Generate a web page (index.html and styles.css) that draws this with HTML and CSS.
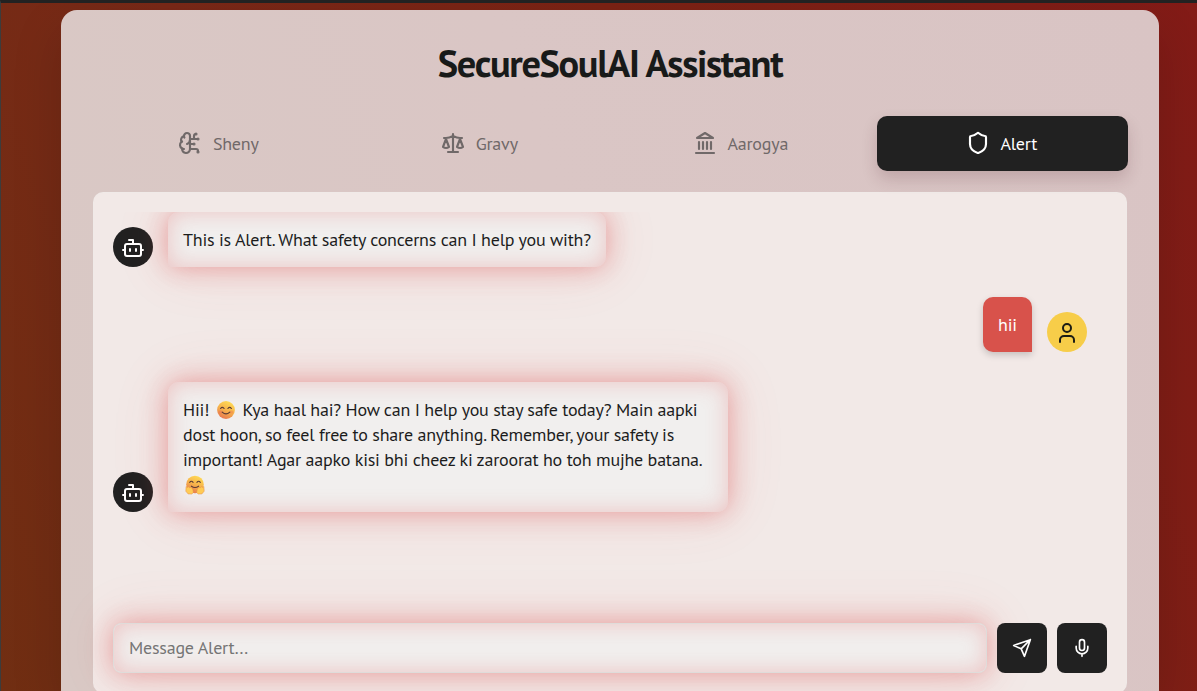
FILE: index.html
```html
<!DOCTYPE html>
<html lang="en">
<head>
<meta charset="utf-8">
<title>SecureSoulAI Assistant</title>
<link rel="stylesheet" href="styles.css">
</head>
<body>
<svg class="defs" width="0" height="0" aria-hidden="true">
  <defs>
    <linearGradient id="face" x1="0.7" y1="0" x2="0.25" y2="1"><stop offset="0" stop-color="#ffdc55"/><stop offset=".5" stop-color="#f6b14b"/><stop offset="1" stop-color="#e5734f"/></linearGradient>
    <symbol id="bot" viewBox="0 0 24 24"><path d="M12 8V4H8"/><rect width="16" height="12" x="4" y="8" rx="2"/><path d="M2 14h2M20 14h2M15 13v2M9 13v2"/></symbol>
  </defs>
</svg>
<main class="card">
  <h1 class="title">SecureSoulAI Assistant</h1>
  <nav class="tabs">
    <button class="tab">
      <svg class="icon" viewBox="0 0 24 24"><path d="M12 5a3 3 0 1 0-5.997.125 4 4 0 0 0-2.526 5.77 4 4 0 0 0 .556 6.588A4 4 0 1 0 12 18Z"/><path d="M9 13a4.5 4.5 0 0 0 3-4M6.003 5.125A3 3 0 0 0 6.401 6.5M3.477 10.896a4 4 0 0 1 .585-.396M6 18a4 4 0 0 1-1.967-.516M12 13h4M12 18h6a2 2 0 0 1 2 2v1M12 8h8M16 8V5a2 2 0 0 1 2-2"/><circle cx="16" cy="13" r=".5"/><circle cx="18" cy="3" r=".5"/><circle cx="20" cy="21" r=".5"/><circle cx="20" cy="8" r=".5"/></svg>
      <span>Sheny</span>
    </button>
    <button class="tab">
      <svg class="icon" viewBox="0 0 24 24"><path d="m16 16 3-8 3 8c-.87.65-1.92 1-3 1s-2.13-.35-3-1ZM2 16l3-8 3 8c-.87.65-1.92 1-3 1s-2.13-.35-3-1ZM7 21h10M12 3v18M3 7h2c2 0 5-1 7-2 2 1 5 2 7 2h2"/></svg>
      <span>Gravy</span>
    </button>
    <button class="tab">
      <svg class="icon" viewBox="0 0 24 24"><path d="M3 22h18M6 18v-7M10 18v-7M14 18v-7M18 18v-7M12 2l8 5H4Z"/></svg>
      <span>Aarogya</span>
    </button>
    <button class="tab active">
      <svg class="icon" viewBox="0 0 24 24"><path d="M20 13c0 5-3.5 7.5-7.66 8.95a1 1 0 0 1-.67-.01C7.5 20.5 4 18 4 13V6a1 1 0 0 1 1-1c2 0 4.5-1.2 6.24-2.72a1.17 1.17 0 0 1 1.52 0C14.51 3.81 17 5 19 5a1 1 0 0 1 1 1z"/></svg>
      <span>Alert</span>
    </button>
  </nav>
  <section class="chat">
    <div class="messages">
      <div class="message">
        <div class="avatar"><svg class="icon"><use href="#bot"/></svg></div>
        <div class="bubble greeting"><p>This is Alert. What safety concerns can I help you with?</p></div>
      </div>
      <div class="message user">
        <div class="bubble"><p>hii</p></div>
        <div class="avatar"><svg class="icon" viewBox="0 0 24 24"><path d="M19 21v-2a4 4 0 0 0-4-4H9a4 4 0 0 0-4 4v2"/><circle cx="12" cy="7" r="4"/></svg></div>
      </div>
      <div class="message">
        <div class="avatar"><svg class="icon"><use href="#bot"/></svg></div>
        <div class="bubble reply">
          <p>Hii!<svg class="emoji smile" viewBox="0 0 20 20"><circle cx="10" cy="10" r="8.9" fill="url(#face)"/><ellipse cx="4.5" cy="12" rx="2" ry="1.5" fill="#ef6558" opacity=".3"/><ellipse cx="15.5" cy="12" rx="2" ry="1.5" fill="#ef6558" opacity=".3"/><g fill="none" stroke="#593a35" stroke-width="1.1" stroke-linecap="round"><path d="M4.6 8.5q1.6-2.2 3.5 0M11.9 8.5q1.8-2.2 3.5 0M6.2 12.2q3.8 3.4 7.6 0"/></g></svg>Kya haal hai? How can I help you stay safe today? Main aapki</p>
          <p>dost hoon, so feel free to share anything. Remember, your safety is</p>
          <p>important! Agar aapko kisi bhi cheez ki zaroorat ho toh mujhe batana.</p>
          <p><svg class="emoji hug" viewBox="0 0 20 20"><circle cx="10" cy="9.5" r="8.8" fill="url(#face)"/><path d="M6.4 11.2q3.6 2.6 7.2 0" fill="none" stroke="#593a35" stroke-width="1.1" stroke-linecap="round"/><path d="M4.7 7.4q1.6-2.2 3.4 0M11.9 7.4q1.8-2.2 3.4 0" fill="none" stroke="#593a35" stroke-width="1.1" stroke-linecap="round"/><path d="M1.1 11.5l1.6 1 .2-1.2 1.8 1.4 1.5-.5 1.6 2.3.6 3.1-1.6 1.4H3.2L.8 16.2ZM18.9 11.5l-1.6 1-.2-1.2-1.8 1.4-1.5-.5-1.6 2.3-.6 3.1 1.6 1.4h3.6l2.4-2.8Z" fill="#ffcb55" stroke="#e58c48" stroke-width=".5"/></svg></p>
        </div>
      </div>
    </div>
    <form class="composer">
      <input class="field" type="text" placeholder="Message Alert...">
      <button class="action" type="button" aria-label="Send"><svg class="icon" viewBox="0 0 24 24"><path d="m22 2-7 20-4-9-9-4ZM22 2 11 13"/></svg></button>
      <button class="action" type="button" aria-label="Record"><svg class="icon" viewBox="0 0 24 24"><path d="M12 2a3 3 0 0 0-3 3v7a3 3 0 0 0 6 0V5a3 3 0 0 0-3-3ZM19 10v2a7 7 0 0 1-14 0v-2M12 19v3"/></svg></button>
    </form>
  </section>
</main>
</body>
</html>
```
FILE: styles.css
```css
* { box-sizing: border-box; }

body {
  height: 691px;
  margin: 0;
  padding-top: 7px;
  overflow: hidden;
  border-top: 3px solid #222;
  border-left: 1px solid #3c3c3c;
  background: linear-gradient(68deg, #702e12 0%, #792817 30%, #7b2214 60%, #831b17 100%);
  font-family: "PT Sans", "Noto Sans", sans-serif;
  font-size: 18px;
  letter-spacing: -0.215px;
  color: #1c1c1c;
}

button, input { font: inherit; margin: 0; letter-spacing: inherit; }
p { margin: 0; height: 25px; white-space: nowrap; }
.defs { position: absolute; }

.card {
  width: 1098px;
  height: 681px;
  margin-left: 60px;
  padding: 32px 32px 0;
  overflow: hidden;
  border-radius: 16px 16px 0 0;
  background: linear-gradient(70deg, #d9c9c5, #dac6c5 50%, #d9c4c4);
  box-shadow: 0 20px 50px rgba(0, 0, 0, .15);
}

.title {
  height: 46px;
  margin: 0 0 28px;
  font-size: 38.4px;
  line-height: 42px;
  letter-spacing: -1.35px;
  text-align: center;
  color: #181a19;
  white-space: nowrap;
}

.tabs {
  display: grid;
  grid-template-columns: repeat(4, 251px);
  gap: 10px;
  width: 1035px;
  padding-left: 1px;
}

.tab {
  display: flex;
  align-items: center;
  justify-content: center;
  gap: 10.5px;
  height: 55px;
  padding: 0 2px 1px 0;
  border: 0;
  border-radius: 10px;
  background: none;
  color: #706969;
}

.tab.active {
  background: #212121;
  color: #fff;
  box-shadow: 0 8px 16px rgba(80, 30, 40, .18);
}

.icon {
  width: 24px;
  height: 24px;
  flex: none;
  fill: none;
  stroke: currentColor;
  stroke-width: 2;
  stroke-linecap: round;
  stroke-linejoin: round;
}

.tab .icon { stroke-width: 2.15; }

.chat {
  height: 501px;
  margin-top: 21px;
  padding: 19px;
  border: 1px solid rgba(240, 234, 232, .7);
  border-radius: 10px;
  background: #f2e9e7;
}

.messages {
  display: flex;
  flex-direction: column;
  gap: 30px;
  height: 391px;
  margin-bottom: 20px;
  padding-right: 20px;
  overflow: hidden;
}

.message { display: flex; align-items: flex-end; gap: 15px; }
.message.user { justify-content: flex-end; }

.avatar {
  display: grid;
  place-items: center;
  width: 40px;
  height: 40px;
  padding-top: 1px;
  border-radius: 50%;
  background: #212121;
  color: #fff;
}

.bubble {
  padding: 15px;
  border-radius: 10px 10px 10px 0;
  background: #f1efee;
  line-height: 25px;
  box-shadow: 0 0 60px rgba(222, 80, 80, .12), 0 0 27px rgba(222, 80, 80, .48), inset 0 0 22px rgba(222, 80, 80, .28);
}

.greeting { width: 438px; }
.reply { width: 560px; }

.user .bubble {
  width: 49px;
  border-radius: 10px 10px 0 10px;
  background: #d8524b;
  color: #fff;
  box-shadow: 0 3px 7px rgba(0, 0, 0, .18);
}

.user .avatar { background: #f7cd49; color: #1c1c14; }
.emoji { width: 20px; height: 20px; vertical-align: -4px; }
.smile { margin: 0 6px 0 7px; }
.hug { margin-left: 2px; }

.composer { display: flex; gap: 10px; }

.field {
  width: 874px;
  height: 50px;
  padding: 0 15px 1px;
  border: 1px solid #dfdcda;
  border-radius: 8px;
  background: #f1efee;
  box-shadow: 0 0 60px rgba(222, 80, 80, .12), 0 0 27px rgba(222, 80, 80, .48), inset 0 0 22px rgba(222, 80, 80, .28);
}

.field::placeholder { color: #757575; opacity: 1; }

.action {
  display: grid;
  place-items: center;
  width: 50px;
  height: 50px;
  padding: 0;
  border: 0;
  border-radius: 8px;
  background: #212121;
  color: #fff;
}

.action .icon { width: 20px; height: 20px; }
```
